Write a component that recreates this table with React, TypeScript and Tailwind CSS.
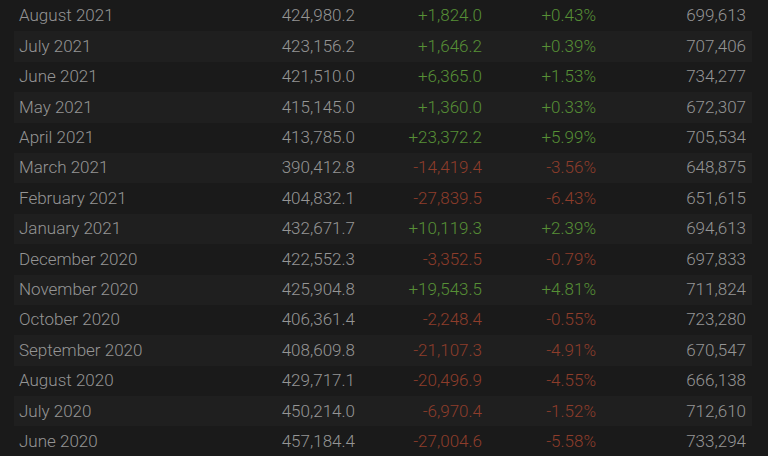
import React from "react";

type Row = [string, string, string, string, string];

const rows: Row[] = [
  ["August 2021", "424,980.2", "+1,824.0", "+0.43%", "699,613"],
  ["July 2021", "423,156.2", "+1,646.2", "+0.39%", "707,406"],
  ["June 2021", "421,510.0", "+6,365.0", "+1.53%", "734,277"],
  ["May 2021", "415,145.0", "+1,360.0", "+0.33%", "672,307"],
  ["April 2021", "413,785.0", "+23,372.2", "+5.99%", "705,534"],
  ["March 2021", "390,412.8", "-14,419.4", "-3.56%", "648,875"],
  ["February 2021", "404,832.1", "-27,839.5", "-6.43%", "651,615"],
  ["January 2021", "432,671.7", "+10,119.3", "+2.39%", "694,613"],
  ["December 2020", "422,552.3", "-3,352.5", "-0.79%", "697,833"],
  ["November 2020", "425,904.8", "+19,543.5", "+4.81%", "711,824"],
  ["October 2020", "406,361.4", "-2,248.4", "-0.55%", "723,280"],
  ["September 2020", "408,609.8", "-21,107.3", "-4.91%", "670,547"],
  ["August 2020", "429,717.1", "-20,496.9", "-4.55%", "666,138"],
  ["July 2020", "450,214.0", "-6,970.4", "-1.52%", "712,610"],
  ["June 2020", "457,184.4", "-27,004.6", "-5.58%", "733,294"],
];

export default function App() {
  return (
    <div
      className="w-[768px] h-[456px] overflow-hidden bg-[#1a1a1a] pl-[14px] pr-[16px] pt-[1px] font-light text-[17px]"
      style={{ fontFamily: "Roboto, 'Liberation Sans', sans-serif" }}
    >
      {rows.map((r, i) => {
        const pos = r[2].startsWith("+");
        const col = pos ? "text-[#579036]" : "text-[#8e3d2b]";
        return (
          <div
            key={i}
            className={`flex items-center h-[30.4px] text-[#959595] ${
              i % 2 === 1 ? "bg-[#1f1f1f]" : ""
            }`}
          >
            <div className="w-[200px] pl-[5px]">{r[0]}</div>
            <div className="w-[141px] text-right">{r[1]}</div>
            <div className={`w-[127px] text-right ${col}`}>{r[2]}</div>
            <div className={`w-[114px] text-right ${col}`}>{r[3]}</div>
            <div className="w-[150px] text-right">{r[4]}</div>
          </div>
        );
      })}
    </div>
  );
}
